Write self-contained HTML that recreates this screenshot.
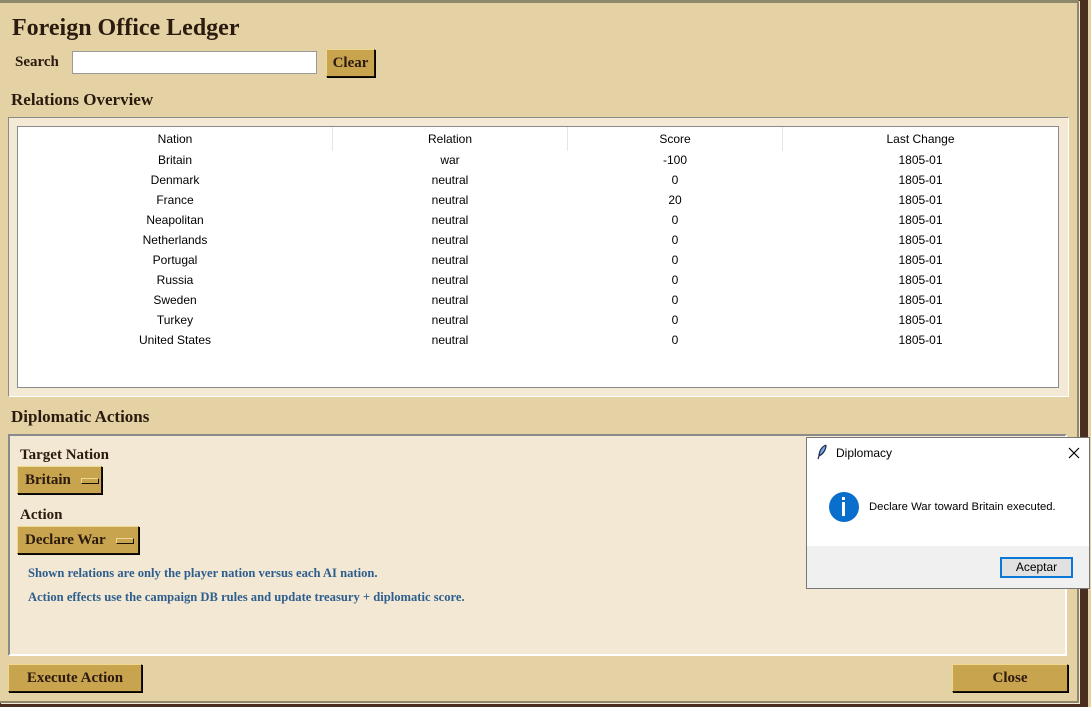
<!DOCTYPE html>
<html><head><meta charset="utf-8"><style>
*{margin:0;padding:0;box-sizing:border-box}
body{width:1091px;height:707px;overflow:hidden;background:#4a2e1e;position:relative;font-family:"Liberation Serif",serif}
.win{position:absolute;left:0;top:0;width:1079px;height:703px;background:#e4d2a5;border-right:2px solid #8f8769;border-bottom:2px solid #8f8769;border-top:3px solid #8f8769;box-shadow:1px 1px 0 #f3e9d5}
.side{position:absolute;left:1088px;top:0;width:3px;height:707px;background:#e4d2a5}
.a{position:absolute;white-space:nowrap}
.h{font-weight:bold;color:#2b1a0e}
.btn{position:absolute;background:#c8a44e;border:1px solid;border-color:#f0d890 #1a1208 #1a1208 #f0d890;box-shadow:1px 1px 0 #000;font-weight:bold;color:#2b1a0e;font-size:15px;text-align:center}
.sans{font-family:"Liberation Sans",sans-serif;font-size:12px;color:#000}
.c{position:absolute;text-align:center}
.mb{display:inline-block;width:18px;height:6px;background:#c8a44e;border:1px solid;border-color:#f0d890 #1a1208 #1a1208 #f0d890;vertical-align:middle;margin-left:10px}
.blue{color:#2e5e8e;font-weight:bold;font-size:12.6px}
</style></head><body>
<div class="side"></div>
<div class="win"></div>
<div class="a h" style="left:12px;top:15px;font-size:24px">Foreign Office Ledger</div>
<div class="a h" style="left:15px;top:54px;font-size:15px">Search</div>
<div class="a" style="left:72px;top:51px;width:245px;height:23px;background:#fff;border:1px solid #9a9a9a"></div>
<div class="btn" style="left:326px;top:49px;width:49px;height:28px;line-height:26px">Clear</div>
<div class="a h" style="left:11px;top:90px;font-size:17px">Relations Overview</div>
<div class="a" style="left:8px;top:117px;width:1061px;height:280px;background:#f3e9d5;border:1px solid;border-color:#8a8a8a #fff #fff #8a8a8a"></div>
<div class="a" style="left:17px;top:126px;width:1042px;height:262px;background:#fff;border:1px solid #8a8a8a"></div>
<div class="a" style="left:332px;top:127px;width:1px;height:24px;background:#e5e5e5"></div>
<div class="a" style="left:567px;top:127px;width:1px;height:24px;background:#e5e5e5"></div>
<div class="a" style="left:782px;top:127px;width:1px;height:24px;background:#e5e5e5"></div>
<div class="sans">
<div class="c" style="left:18px;width:314px;top:132px">Nation<br><div style="line-height:20px;margin-top:4px">Britain<br>Denmark<br>France<br>Neapolitan<br>Netherlands<br>Portugal<br>Russia<br>Sweden<br>Turkey<br>United States</div></div>
<div class="c" style="left:333px;width:234px;top:132px">Relation<br><div style="line-height:20px;margin-top:4px">war<br>neutral<br>neutral<br>neutral<br>neutral<br>neutral<br>neutral<br>neutral<br>neutral<br>neutral</div></div>
<div class="c" style="left:568px;width:214px;top:132px">Score<br><div style="line-height:20px;margin-top:4px">-100<br>0<br>20<br>0<br>0<br>0<br>0<br>0<br>0<br>0</div></div>
<div class="c" style="left:783px;width:275px;top:132px">Last Change<br><div style="line-height:20px;margin-top:4px">1805-01<br>1805-01<br>1805-01<br>1805-01<br>1805-01<br>1805-01<br>1805-01<br>1805-01<br>1805-01<br>1805-01</div></div>
</div>
<div class="a h" style="left:11px;top:407px;font-size:17px">Diplomatic Actions</div>
<div class="a" style="left:8px;top:434px;width:1059px;height:222px;background:#f2e8d4;border:2px solid;border-color:#8a8a8a #fff #fff #8a8a8a"></div>
<div class="a h" style="left:20px;top:447px;font-size:15px">Target Nation</div>
<div class="btn" style="left:17px;top:466px;width:85px;height:28px;line-height:26px;text-align:left;padding-left:7px">Britain<span class="mb"></span></div>
<div class="a h" style="left:20px;top:507px;font-size:15px">Action</div>
<div class="btn" style="left:17px;top:526px;width:122px;height:28px;line-height:26px;text-align:left;padding-left:7px">Declare War<span class="mb"></span></div>
<div class="a blue" style="left:28px;top:566px">Shown relations are only the player nation versus each AI nation.</div>
<div class="a blue" style="left:28px;top:590px">Action effects use the campaign DB rules and update treasury + diplomatic score.</div>
<div class="btn" style="left:8px;top:664px;width:134px;height:28px;line-height:26px">Execute Action</div>
<div class="btn" style="left:952px;top:664px;width:116px;height:28px;line-height:26px">Close</div>
<div class="a" style="left:806px;top:437px;width:284px;height:152px;background:#fff;border:1px solid #777"></div>
<div class="a" style="left:807px;top:546px;width:282px;height:42px;background:#f0f0f0"></div>
<svg class="a" style="left:816px;top:444px" width="12" height="16" viewBox="0 0 12 16"><path d="M10 1 C5 3 3 8 3 12 L2 15 M3 12 C7 10 10 6 10 1" fill="#7aa7e0" stroke="#1a2a4a" stroke-width="1.2"/></svg>
<div class="a sans" style="left:836px;top:446px">Diplomacy</div>
<svg class="a" style="left:1068px;top:447px" width="12" height="12"><path d="M1 1L11 11M11 1L1 11" stroke="#000" stroke-width="1.2"/></svg>
<div class="a" style="left:829px;top:492px;width:30px;height:30px;border-radius:50%;background:#0a6fcc"></div>
<div class="a" style="left:842px;top:497px;width:3px;height:3px;background:#fff"></div>
<div class="a" style="left:842px;top:502px;width:3px;height:14px;background:#fff"></div>
<div class="a sans" style="left:869px;top:501px;font-size:11.3px">Declare War toward Britain executed.</div>
<div class="a sans" style="left:1000px;top:557px;width:73px;height:21px;background:#e1e1e1;border:2px solid #0a78d7;text-align:center;line-height:17px">Aceptar</div>
</body></html>
